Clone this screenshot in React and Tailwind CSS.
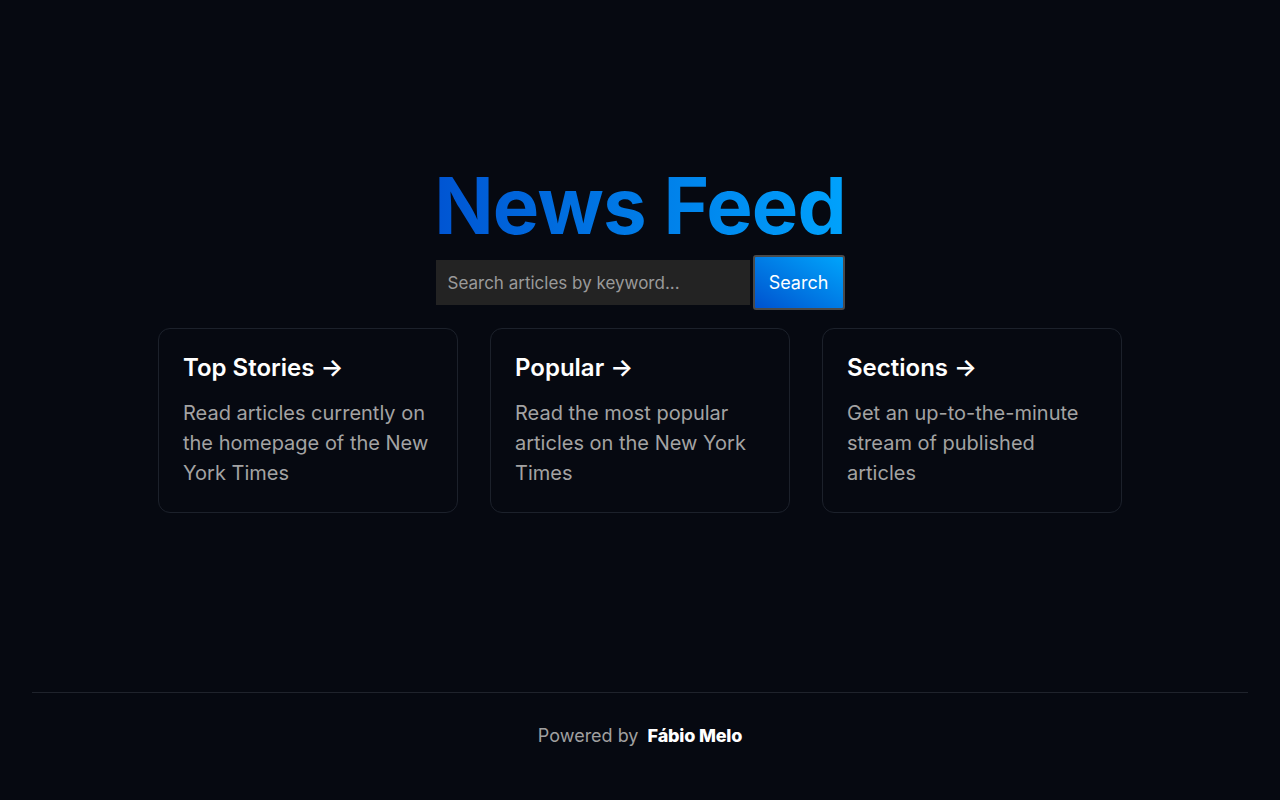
const cards = [
  {
    title: 'Top Stories',
    text: 'Read articles currently on the homepage of the New York Times',
  },
  {
    title: 'Popular',
    text: 'Read the most popular articles on the New York Times',
  },
  {
    title: 'Sections',
    text: 'Get an up-to-the-minute stream of published articles',
  },
];

export default function App() {
  return (
    <div className="h-screen flex flex-col bg-[#060911] text-white font-['Inter','Noto_Sans',sans-serif]">
      <main className="flex-1 flex flex-col items-center pt-[160px]">
        <h1 className="text-[78px] leading-[92px] font-bold tracking-[-0.8px] bg-gradient-to-r from-[#0054d2] to-[#00a2fc] bg-clip-text text-transparent">
          News Feed
        </h1>

        {/* search */}
        <form className="flex items-center gap-[3px] mt-[3px]" onSubmit={(e) => e.preventDefault()}>
          <input
            type="text"
            placeholder="Search articles by keyword..."
            className="w-[314px] h-[45px] bg-[#232323] px-3 text-[17px] text-white placeholder:text-[#9a9a9a] outline-none"
          />
          <button
            type="submit"
            className="w-[92px] h-[55px] rounded-[3px] border-2 border-[#4a4a4a] bg-gradient-to-tr from-[#0052cf] to-[#00a4fb] text-[18px] text-white"
          >
            Search
          </button>
        </form>

        {/* cards */}
        <div className="grid grid-cols-3 gap-8 mt-[18px]">
          {cards.map((c) => (
            <a
              key={c.title}
              href="#"
              className="w-[300px] h-[185px] rounded-xl border border-[#1c212b] px-[24px] pt-[21px]"
            >
              <h2 className="text-[24px] leading-[36px] font-semibold text-white">
                {c.title} <span>&rarr;</span>
              </h2>
              <p className="mt-[12px] text-[20px] leading-[30px] text-[#a3a3a3]">{c.text}</p>
            </a>
          ))}
        </div>
      </main>

      <footer className="mx-8 h-[108px] border-t border-[#1f232c] flex justify-center pt-[32px]">
        <p className="text-[18px] leading-[22px] text-[#a0a0a0]">
          Powered by{' '}
          <span className="ml-1 font-extrabold text-white tracking-[-0.2px]">Fábio Melo</span>
        </p>
      </footer>
    </div>
  );
}
